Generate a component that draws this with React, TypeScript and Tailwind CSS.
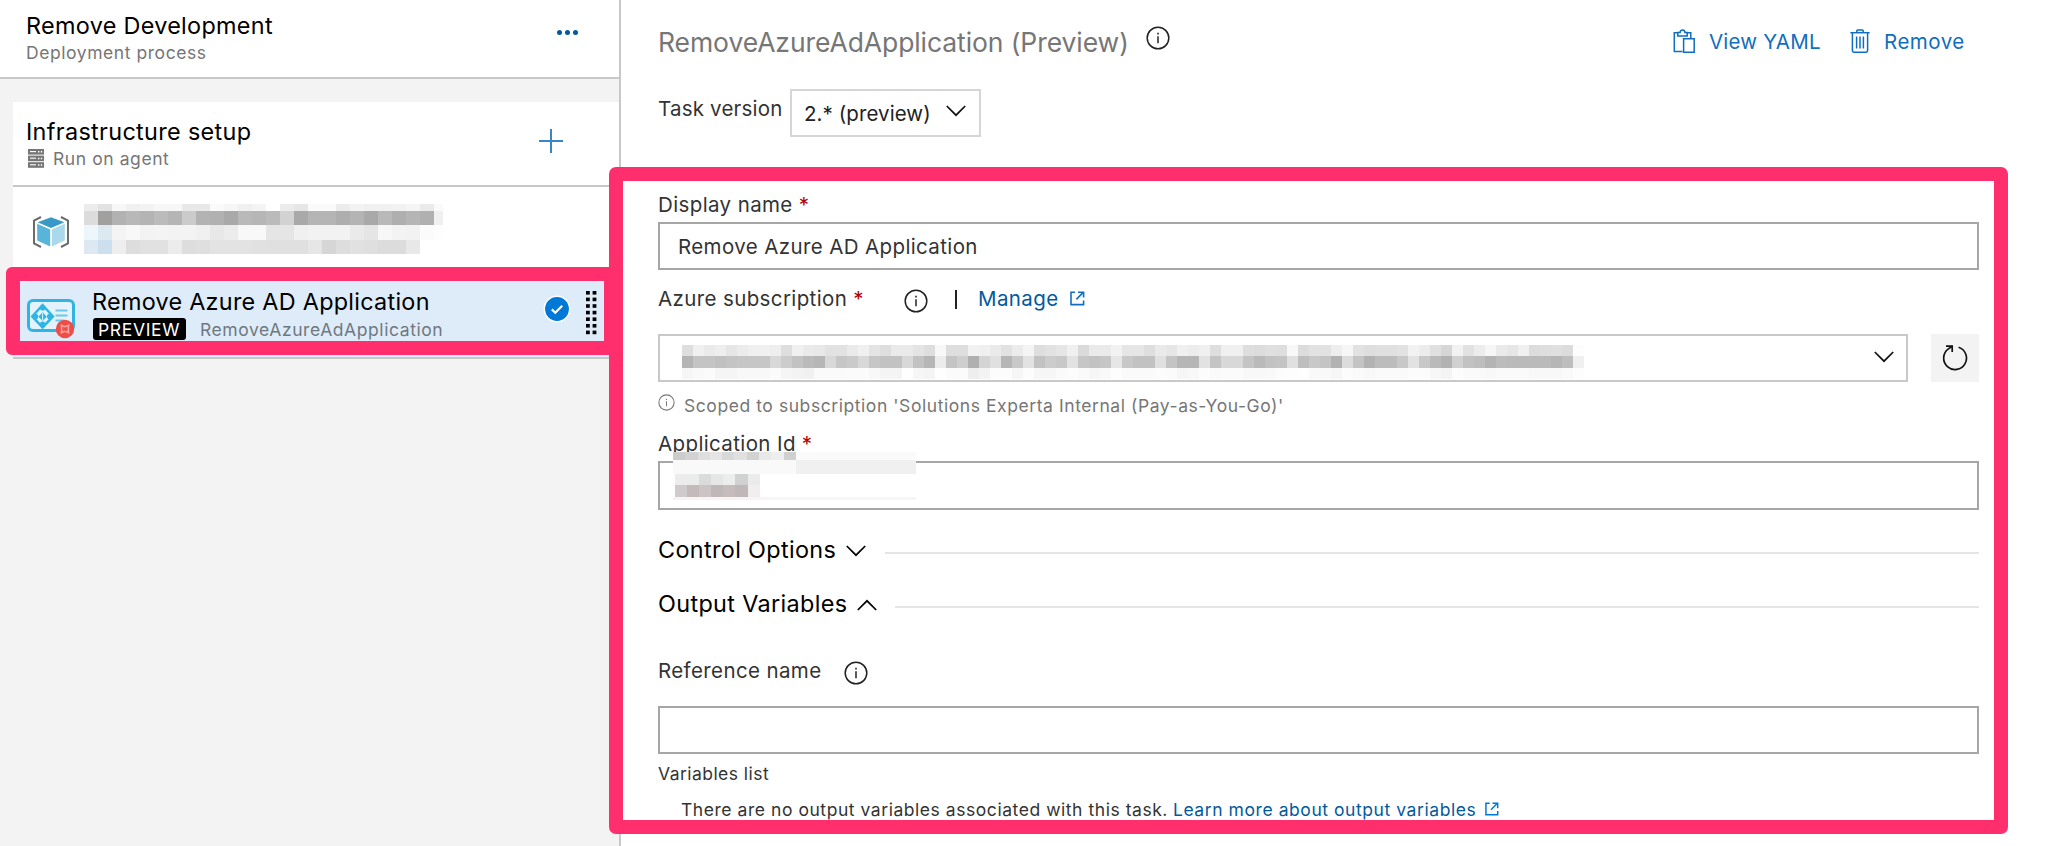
import type { ReactNode } from "react";

type Cells = string;

/** One strip of a redaction mosaic; every cell is a grey level ("c4") or a full colour ("cfe0ee"). */
function MosaicRow({ cells, cell, height }: { cells: Cells; cell: string; height: string }) {
  return (
    <div className={`flex ${height}`}>
      {cells.split(" ").map((c, i) => (
        <div
          key={i}
          className={`h-full shrink-0 ${cell}`}
          style={{ backgroundColor: c.length === 2 ? `#${c}${c}${c}` : `#${c}` }}
        />
      ))}
    </div>
  );
}

function InfoIcon({ className }: { className: string }) {
  return (
    <svg viewBox="0 0 24 24" fill="none" stroke="currentColor" className={`shrink-0 ${className}`}>
      <circle cx="12" cy="12" r="10.8" strokeWidth="1.5" />
      <path d="M12 10.2V17.2" strokeWidth="1.5" />
      <path d="M12 6.8V8.4" strokeWidth="1.6" />
    </svg>
  );
}

function ChevronIcon({ className }: { className: string }) {
  return (
    <svg viewBox="0 0 20 12" fill="none" stroke="currentColor" strokeWidth="1.7" className={`shrink-0 ${className}`}>
      <path d="M0.8 1L10 10.2L19.2 1" />
    </svg>
  );
}

function ExternalIcon({ className }: { className: string }) {
  return (
    <svg viewBox="0 0 15 15" fill="none" stroke="currentColor" strokeWidth="1.6" className={`shrink-0 ${className}`}>
      <path d="M5 1.3H1V13.6H13.6V9.6" />
      <path d="M6.4 8.4L13 1.6" />
      <path d="M8 1.3H13.6V6.6" />
    </svg>
  );
}

function ClipboardIcon() {
  return (
    <svg viewBox="0 0 22 24" fill="none" stroke="currentColor" strokeWidth="1.5" className="h-6 w-[22px] shrink-0">
      <path d="M9.5 22.5H1.3V3.8H5M14 3.8H17.8V9" />
      <path d="M4.8 3.4V7H14.2V3.4H11.9C11.9 0.2 7.1 0.2 7.1 3.4Z" />
      <path d="M10.6 9.8H21.2V23.2H10.6Z" />
    </svg>
  );
}

function TrashIcon() {
  return (
    <svg viewBox="0 0 20 24" fill="none" stroke="currentColor" strokeWidth="1.5" className="h-6 w-5 shrink-0">
      <path d="M0.4 3.7H19.6" />
      <path d="M6.8 3.6V1.8Q6.8 0.9 7.7 0.9H12.3Q13.2 0.9 13.2 1.8V3.6" />
      <path d="M2.4 3.7V21.8Q2.4 23.2 3.8 23.2H16.2Q17.6 23.2 17.6 21.8V3.7" />
      <path d="M6.6 7.5V19.5M10 7.5V19.5M13.4 7.5V19.5" />
    </svg>
  );
}

function RefreshIcon() {
  return (
    <svg viewBox="0 0 26 26" fill="none" stroke="#111" strokeWidth="1.7" className="h-[26px] w-[26px]">
      <path d="M16.6 2.3A11.4 11.4 0 1 1 6.4 3.9L10.2 1.2" />
      <path d="M4 1.2H10.2V7" />
    </svg>
  );
}

function ServerIcon() {
  return (
    <svg viewBox="0 0 16 19" className="h-[19px] w-4 shrink-0">
      {[0, 6.6, 13.2].map((y) => (
        <g key={y}>
          <rect x="0" y={y} width="16" height="5.6" fill="#767676" />
          <path d={`M2 ${y + 2.6}H8`} stroke="#fff" strokeWidth="1.1" />
          <path d={`M10 ${y + 2.8}H11.4M12.8 ${y + 2.8}H14.2`} stroke="#fff" strokeWidth="1.5" />
        </g>
      ))}
    </svg>
  );
}

function ResourceGroupIcon() {
  return (
    <svg viewBox="0 0 38 32" className="h-8 w-[38px] shrink-0">
      <g fill="none" stroke="#6b6b6b" strokeWidth="2">
        <path d="M9 1L2 4.6V27.4L9 31" />
        <path d="M29 1L36 4.6V27.4L29 31" />
      </g>
      <path d="M19 1.2L32.4 6.2L19 12L5.6 6.2Z" fill="#3999c6" />
      <path d="M5.2 7.8L18.2 13.4V30.4L5.2 24.6Z" fill="#59b4d9" />
      <path d="M32.8 7.8L19.8 13.4V30.4L32.8 24.6Z" fill="#a9d9ea" />
    </svg>
  );
}

function AdApplicationIcon() {
  return (
    <svg viewBox="0 0 50 42" className="h-[42px] w-[50px] shrink-0">
      <rect x="1.5" y="2.6" width="45" height="30" rx="4.5" fill="#e4f3fb" stroke="#2fb4e4" strokeWidth="3" />
      <path d="M15.6 7L26 18.4L15.6 29.4L5.2 18.4Z" fill="none" stroke="#2fb4e4" strokeWidth="2.4" />
      <circle cx="15.6" cy="9.8" r="2.8" fill="#2fb4e4" />
      <circle cx="8.4" cy="18.6" r="2.8" fill="#2fb4e4" />
      <circle cx="22.8" cy="18.6" r="2.8" fill="#2fb4e4" />
      <circle cx="15.6" cy="26" r="2.6" fill="#2fb4e4" />
      <path d="M11.4 18.8L15.6 14.2L19.8 18.8L15.6 22.8Z" fill="#2fb4e4" />
      <path d="M15.6 15V22" stroke="#e4f3fb" strokeWidth="1" />
      <path d="M28.5 12.4H40.5M28.5 17.4H40.5M28.5 22.4H37" stroke="#6cc8ea" strokeWidth="2" />
      <circle cx="38" cy="31" r="9.2" fill="#ee4e4a" />
      <path
        d="M34.4 27.2L36.8 28.4H39.2L41.6 27.2L41.4 29.8V32.2L41.6 34.8L39.2 33.6H36.8L34.4 34.8L34.6 32.2V29.8Z"
        fill="none"
        stroke="#f9a6a0"
        strokeWidth="1.5"
      />
    </svg>
  );
}

function CheckBadge() {
  return (
    <svg viewBox="0 0 28 28" className="h-7 w-7 shrink-0">
      <circle cx="14" cy="14" r="13.4" fill="#fff" />
      <circle cx="14" cy="14" r="11.9" fill="#0078d7" />
      <path d="M8.8 14.4L12.3 17.8L19.2 10.8" fill="none" stroke="#fff" strokeWidth="2.2" />
    </svg>
  );
}

function DragHandle() {
  return (
    <svg viewBox="0 0 11 44" className="h-[44px] w-[11px]" fill="#000">
      {[0, 1, 2, 3, 4, 5, 6].map((row) => (
        <g key={row}>
          <rect x="0" y={row * 6.6} width="3.8" height="3.6" />
          <rect x="6.6" y={row * 6.6} width="3.8" height="3.6" />
        </g>
      ))}
    </svg>
  );
}

function Label({ children, required }: { children: ReactNode; required?: boolean }) {
  return (
    <div className="flex h-[25px] text-[20.5px] leading-[25px] tracking-[0.38px] text-[#333]">
      <span>{children}</span>
      {required && <span className="ml-[6px] text-[#b30000]">*</span>}
    </div>
  );
}

function SectionHeader({ title, open, rule }: { title: string; open?: boolean; rule: string }) {
  return (
    <div className="flex h-[31px] items-center text-[23.4px] leading-[31px] tracking-[0.35px] text-black">
      <span className="shrink-0">{title}</span>
      <ChevronIcon className={open ? "mt-[3px] ml-[10px] h-3 w-5 rotate-180" : "mt-[3px] ml-[10px] h-3 w-5"} />
      <span className={`mt-[6px] ml-auto h-[2px] bg-[#e6e6e6] ${rule}`} />
    </div>
  );
}

function ProcessPanel() {
  return (
    <aside className="flex h-full w-[621px] shrink-0 flex-col border-r-2 border-[#c8c8c8] bg-[#f3f3f3]">
      <header className="flex h-[79px] shrink-0 justify-between border-b-2 border-[#c8c8c8] bg-white pt-[10px] pr-[41px] pl-[26px]">
        <div>
          <h1 className="text-[23.4px] leading-[31px] tracking-[0.31px] text-black">Remove Development</h1>
          <p className="text-[17.5px] leading-[23px] tracking-[0.56px] text-[#767676]">Deployment process</p>
        </div>
        <div className="flex h-[44px] items-center gap-[3px]">
          <span className="h-[5px] w-[5px] rounded-full bg-[#005a9e]" />
          <span className="h-[5px] w-[5px] rounded-full bg-[#005a9e]" />
          <span className="h-[5px] w-[5px] rounded-full bg-[#005a9e]" />
        </div>
      </header>

      <div className="mt-[23px] ml-[13px] flex flex-col bg-white">
        <div className="flex h-[85px] justify-between border-b-2 border-[#c8c8c8] pt-[14px] pr-[56px] pl-[13px]">
          <div>
            <h2 className="text-[23.4px] leading-[31px] tracking-[0.34px] text-black">Infrastructure setup</h2>
            <div className="flex items-center pl-[2px]">
              <ServerIcon />
              <span className="ml-[9px] text-[17.5px] leading-[23px] tracking-[0.58px] text-[#767676]">Run on agent</span>
            </div>
          </div>
          <svg viewBox="0 0 24 24" className="mt-[13px] h-6 w-6" stroke="#3a85c6" strokeWidth="2">
            <path d="M12 0V24M0 12H24" />
          </svg>
        </div>

        <div className="flex h-[80px] pt-[17px] pl-[19px]">
          <div className="pt-[12px]">
            <ResourceGroupIcon />
          </div>
          <div className="ml-[14px] w-[359px] overflow-hidden">
            <MosaicRow
              cell="w-[14px]"
              height="h-[7px]"
              cells="ec e2 f7 f0 f3 f7 f7 e8 e8 fa f6 f0 f4 ff ec e6 fa fa ec f3 f0 f0 f2 f5 ea fa"
            />
            <MosaicRow
              cell="w-[14px]"
              height="h-[14px]"
              cells="dc a2a09f b2 b8 b4 bb b5 cb b3 b1 a9 b9 b6 bb d2 a9 b5 b5 ae b4 a9 b9 af b5 b0 f0"
            />
            <MosaicRow
              cell="w-[14px]"
              height="h-[15px]"
              cells="edf7fb dce9f1 f4 f8 f3 f4 f3 f3 f0 e8 ec f8 f8 e5 e5 f0 f2 f2 f2 ea e5 f7 f3 f2 fb fd"
            />
            <MosaicRow
              cell="w-[14px]"
              height="h-[14px]"
              cells="dde8f1 cbdfee ee dd e1 e1 ec dd df e3 e3 e3 e1 e0 e0 e0 e6 d6 dd e1 df dc dc e8"
            />
          </div>
        </div>

        <div className="flex h-[92px] border-b-2 border-[#c8c8c8] bg-[#deecf9] pr-[22px] pl-[14px]">
          <div className="pt-[31px]">
            <AdApplicationIcon />
          </div>
          <div className="pt-[19px] pl-[15px]">
            <h3 className="text-[23.4px] leading-[31px] tracking-[0.27px] text-black">Remove Azure AD Application</h3>
            <div className="mt-px flex h-[22px] items-center pl-px text-[17.5px] leading-[22px]">
              <span className="h-[22px] w-[93px] rounded-[3px] bg-black pl-[5px] leading-[23px] tracking-[0.66px] text-white">
                PREVIEW
              </span>
              <span className="ml-[14px] pt-px tracking-[0.58px] text-[#6f7880]">RemoveAzureAdApplication</span>
            </div>
          </div>
          <div className="ml-auto flex pt-[24px]">
            <div className="pt-[4px]">
              <CheckBadge />
            </div>
            <div className="ml-[15px]">
              <DragHandle />
            </div>
          </div>
        </div>
      </div>
    </aside>
  );
}

function TaskPanel() {
  return (
    <main className="flex grow flex-col pl-[37px]">
      <header className="flex h-[89px] shrink-0 pt-[22px] pr-[80px]">
        <h2 className="w-[488px] text-[26.5px] leading-[40px] tracking-[-0.08px] whitespace-nowrap text-[#767676]">
          RemoveAzureAdApplication (Preview)
        </h2>
        <InfoIcon className="mt-[4px] h-6 w-6 text-[#222]" />
        <div className="ml-auto flex pt-[7px] text-[20.5px] leading-[25px] text-[#106ebe]">
          <button className="flex w-[177px]">
            <ClipboardIcon />
            <span className="ml-[14px] tracking-[0.2px]">View YAML</span>
          </button>
          <button className="flex w-[120px]">
            <TrashIcon />
            <span className="ml-[14px] tracking-[0.5px]">Remove</span>
          </button>
        </div>
      </header>

      <div className="flex h-[48px] shrink-0">
        <span className="w-[132px] text-[20.5px] leading-[39px] tracking-[0.2px] text-[#333]">Task version</span>
        <div className="flex w-[191px] items-center border-2 border-[#d6d6d6] pt-px pl-[12px] text-[20.5px] leading-[24px] tracking-[0.08px] text-[#222]">
          <span>2.* (preview)</span>
          <ChevronIcon className="-mt-[5px] ml-[15px] h-3 w-5 text-[#111]" />
        </div>
      </div>

      <div className="mt-[55px] w-[1321px]">
        <Label required>Display name</Label>
        <div className="mt-[5px] flex h-[48px] items-center border-2 border-[#a6a6a6] pt-[2px] pl-[18px] text-[20.5px] tracking-[0.38px] text-[#333]">
          Remove Azure AD Application
        </div>

        <div className="mt-[16px] flex h-[25px]">
          <div className="w-[246px]">
            <Label required>Azure subscription</Label>
          </div>
          <InfoIcon className="mt-[3px] h-6 w-6 text-[#222]" />
          <span className="mt-[4px] ml-[27px] h-[19px] w-[2px] bg-[#222]" />
          <a className="ml-[21px] flex text-[20.5px] leading-[25px] tracking-[0.4px] text-[#005a9e]">
            Manage
            <ExternalIcon className="mt-[5px] ml-[11px] h-[15px] w-[15px] text-[#106ebe]" />
          </a>
        </div>

        <div className="mt-[23px] flex h-[48px] justify-between">
          <div className="flex w-[1250px] justify-between border-2 border-[#c8c8c8] pr-[12px] pl-[22px]">
            <div className="pt-[9px]">
              <MosaicRow
                cell="w-[11px]"
                height="h-[11px]"
                cells="de f0 ea ee e6 ec f0 f0 ee de f0 ea e8 e2 e2 ea f0 e4 de ea ea e4 de f8 de de f2 f0 ea e2 ec f4 de e2 e6 f0 da ea ea f2 e6 e6 de ea e6 f0 ec f0 de f0 f0 de dc e0 de f8 dc e2 e2 ee f6 e2 de e0 e0 e2 f2 ec e0 d6 f2 e2 ec f6 ea e6 f0 dc de e0 dc fd"
              />
              <MosaicRow
                cell="w-[11px]"
                height="h-[12px]"
                cells="b4 c4 c4 c0 c4 c6 c6 c6 d8 cc c2 ba b6 d8 c6 ca d8 c6 c2 c2 d8 c2 b6 ec c4 ce b0 d4 e0 b6 c8 e2 c2 cc c8 e2 c6 c2 c6 e6 c8 c2 c2 e0 c4 b6 b6 e2 c4 d8 d8 c4 ba c2 c4 e0 be c8 c4 b2 dc c4 b2 bc bc c8 e2 c8 ba b2 d0 c2 be b4 bc ba ba ba ba b6 be f0"
              />
              <MosaicRow
                cell="w-[11px]"
                height="h-[11px]"
                cells="f6 f9 fb f5 f5 f8 f8 f8 fb f5 f3 f1 fa fa fa fb fb f8 f4 f4 fe f6 f4 fe fb fb ee f3 fc fc f6 fc f6 f6 fa fc fa f6 f9 fd fa fa fa fc fb f6 f8 fc fa fb fb f8 f8 f9 fc fd fe f9 f9 f6 fc fa f8 fa fa fa fc fc f7 f4 fc fa fa f8 fa fa fa f8 f8 f8 fa fd"
              />
            </div>
            <ChevronIcon className="mt-[15px] h-3 w-5 text-[#111]" />
          </div>
          <div className="flex w-[48px] items-center justify-center bg-[#f3f3f3]">
            <RefreshIcon />
          </div>
        </div>

        <div className="mt-[12px] flex h-[24px] text-[17.5px] leading-[23px] tracking-[0.565px] text-[#767676]">
          <InfoIcon className="h-[17px] w-[17px]" />
          <span className="ml-[9px]">Scoped to subscription 'Solutions Experta Internal (Pay-as-You-Go)'</span>
        </div>

        <div className="relative mt-[13px]">
          <Label required>Application Id</Label>
          <div className="mt-[5px] h-[49px] border-2 border-[#a6a6a6]" />
          <div className="absolute top-[21px] left-[15px] w-[243px] bg-white">
            <div className="flex h-[8px] bg-[#fafafa]">
              <MosaicRow cell="w-[12.3px]" height="h-[8px]" cells="cc d2 de e4 d8 e0 d2 e8 ee d0" />
            </div>
            <div className="flex h-[14px]">
              <div className="w-[123px] bg-[#f9f9f9]" />
              <div className="grow bg-[#f0f0f0]" />
            </div>
            <div className="pl-[2px]">
              <MosaicRow cell="w-[12.1px]" height="h-[11px]" cells="ec eaecec dadcdc e6 eceeee d0d2d1 eb" />
              <MosaicRow cell="w-[12.1px]" height="h-[12px]" cells="cfcacb c3baba ccc4c4 c0b8b8 c6bcbc bfb7b8 f0eeee" />
            </div>
            <div className="h-[3px] bg-[#f6f4f4]" />
          </div>
        </div>

        <div className="mt-[24px]">
          <SectionHeader title="Control Options" rule="w-[1094px]" />
        </div>
        <div className="mt-[23px]">
          <SectionHeader title="Output Variables" open rule="w-[1084px]" />
        </div>

        <div className="mt-[39px] flex h-[25px]">
          <div className="w-[186px]">
            <Label>Reference name</Label>
          </div>
          <InfoIcon className="mt-[3px] h-6 w-6 text-[#222]" />
        </div>
        <div className="mt-[23px] h-[48px] border-2 border-[#a6a6a6]" />

        <div className="mt-[8px] text-[17.5px] leading-[23px] tracking-[0.458px] text-[#333]">Variables list</div>
        <div className="mt-[13px] flex pl-[23px] text-[17.5px] leading-[24px] text-[#333]">
          <span className="tracking-[0.55px]">There are no output variables associated with this task.</span>
          <a className="ml-[5px] flex tracking-[0.565px] text-[#005a9e]">
            Learn more about output variables
            <ExternalIcon className="mt-[4px] ml-[9px] h-[14px] w-[14px] text-[#0078d7]" />
          </a>
        </div>
      </div>
    </main>
  );
}

export default function App() {
  return (
    <div className="relative flex h-[846px] w-[2050px] overflow-hidden bg-white font-['Inter','Liberation_Sans',sans-serif]">
      <ProcessPanel />
      <TaskPanel />
      <div className="absolute top-[267px] left-[6px] h-[88px] w-[612px] rounded-[6px] border-[14px] border-[#ff2e6d]" />
      <div className="absolute top-[167px] left-[609px] h-[667px] w-[1399px] rounded-[7px] border-[14px] border-[#ff2e6d]" />
    </div>
  );
}
